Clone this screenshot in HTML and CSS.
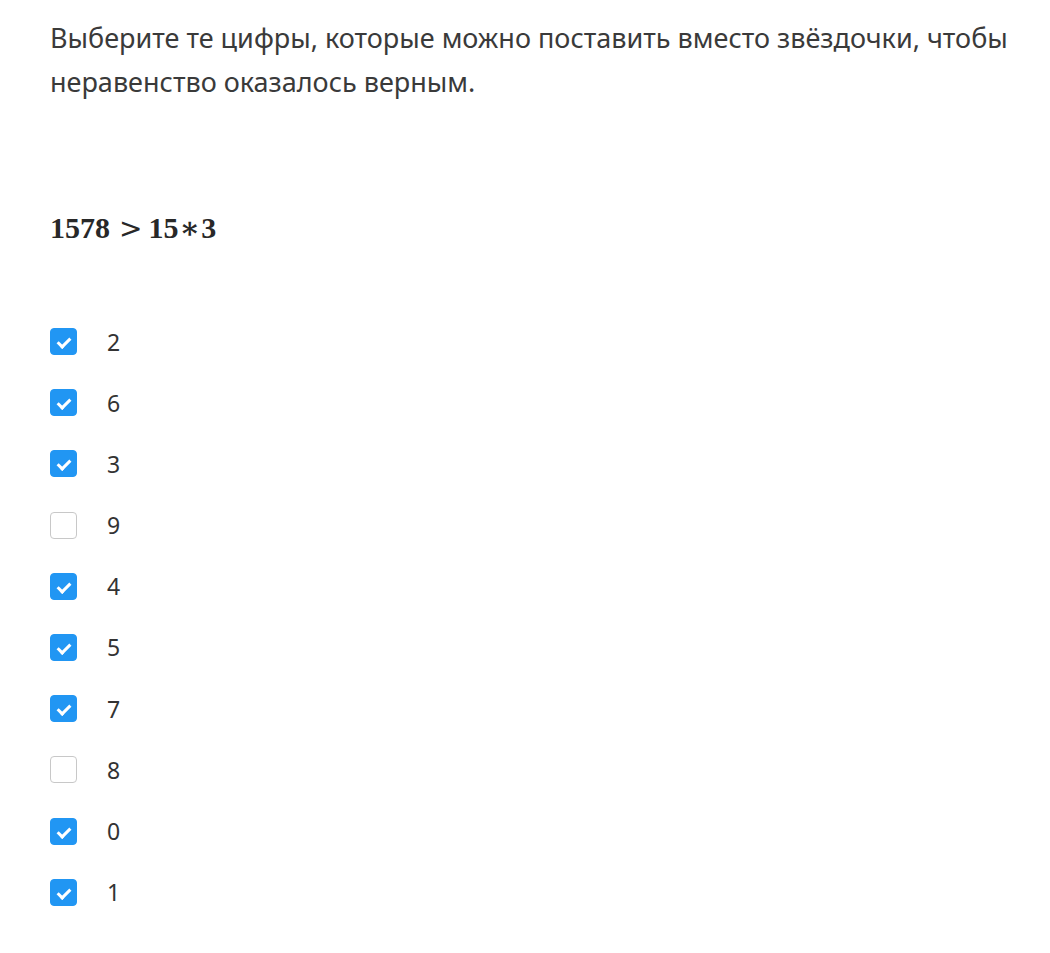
FILE: index.html
```html
<!DOCTYPE html>
<html lang="ru">
  <head>
    <meta charset="UTF-8" />
    <meta name="viewport" content="width=device-width, initial-scale=1.0" />
    <title>Задание</title>
    <link rel="stylesheet" href="styles.css">
  </head>
  <body>
    <main>
      <p class="vopros">
        Выберите те цифры, которые можно поставить вместо звёздочки, чтобы
        неравенство оказалось верным.
      </p>

      <p class="formula">1578<span class="rel">&gt;</span>15<span class="zvezda">∗</span>3</p>

      <ul class="otvety">
        <li><span class="box on"></span><span class="cifra">2</span></li>
        <li><span class="box on"></span><span class="cifra">6</span></li>
        <li><span class="box on"></span><span class="cifra">3</span></li>
        <li><span class="box"></span><span class="cifra">9</span></li>
        <li><span class="box on"></span><span class="cifra">4</span></li>
        <li><span class="box on"></span><span class="cifra">5</span></li>
        <li><span class="box on"></span><span class="cifra">7</span></li>
        <li><span class="box"></span><span class="cifra">8</span></li>
        <li><span class="box on"></span><span class="cifra">0</span></li>
        <li><span class="box on"></span><span class="cifra">1</span></li>
      </ul>
    </main>
  </body>
</html>
```

FILE: styles.css
```css
* {
  margin: 0px;
  padding: 0px;
  box-sizing: border-box;
}

body {
  background-color: white;
  color: rgb(51, 51, 51);
  font-family: "Noto Sans", "Open Sans", sans-serif;
}

main {
  padding: 16px 40px 0px 50px;
}

.vopros {
  font-size: 27px;
  line-height: 44px;
  color: rgb(58, 58, 58);
}

.formula {
  margin-top: 106px;
  font-family: "Liberation Serif", "DejaVu Serif", serif;
  font-weight: bold;
  font-size: 30px;
  line-height: 36px;
  color: rgb(40, 40, 40);
}

.rel {
  margin: 0px 6px 0px 9px;
  font-family: "DejaVu Sans", sans-serif;
  font-weight: normal;
  font-size: 28px;
}

.zvezda {
  margin: 0px 1px;
}

.otvety {
  list-style: none;
  margin-top: 81px;
}

.otvety li {
  display: flex;
  align-items: center;
  height: 27px;
  margin-bottom: 34.2px;
}

.box {
  width: 27px;
  height: 27px;
  border: 1.5px solid rgb(200, 200, 200);
  border-radius: 4px;
  background-color: white;
  position: relative;
}

.box.on {
  border-color: rgb(33, 150, 243);
  background-color: rgb(33, 150, 243);
}

.box.on::after {
  content: "";
  position: absolute;
  left: 9px;
  top: 6px;
  width: 5px;
  height: 10px;
  border-right: 3px solid white;
  border-bottom: 3px solid white;
  transform: rotate(45deg);
}

.cifra {
  margin-left: 30px;
  font-size: 23px;
  color: rgb(51, 51, 51);
}
```
